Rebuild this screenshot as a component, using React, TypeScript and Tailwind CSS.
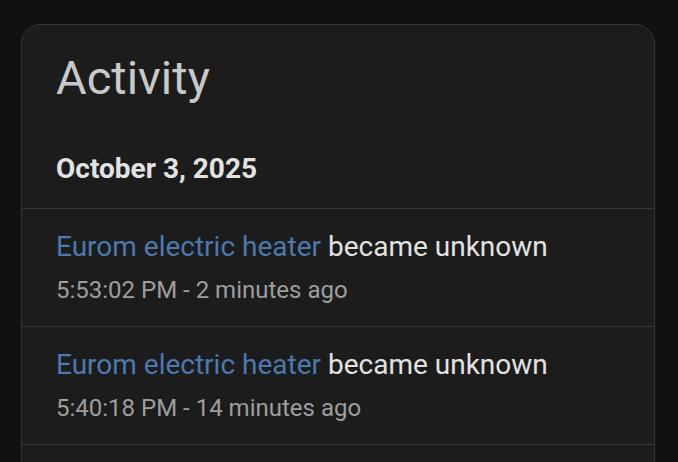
const entries = [
  { time: '5:53:02 PM', ago: '2 minutes ago' },
  { time: '5:40:18 PM', ago: '14 minutes ago' },
];

export default function App() {
  return (
    <div
      className="min-h-screen bg-[#111111] pl-[21px] pr-[23px] pt-[24px]"
      style={{ fontFamily: 'Roboto, "Noto Sans", sans-serif' }}
    >
      <div className="rounded-[20px] border border-[#353535] bg-[#1c1c1c] overflow-hidden">
        {/* Header */}
        <div className="px-[34px] pt-[29px]">
          <h1 className="text-[47px] leading-[48px] font-normal text-[#c9c9c9]">Activity</h1>
          <div className="mt-[53px] pb-[25px] text-[28px] leading-[28px] font-bold text-[#e2e2e2]">
            October 3, 2025
          </div>
        </div>

        {/* Entries */}
        {entries.map((e, i) => (
          <div key={i} className="border-t border-[#353535] px-[34px] py-6">
            <div className="text-[28px] leading-[28px] whitespace-nowrap">
              <span className="text-[#4c79ad]">Eurom electric heater</span>{' '}
              <span className="text-[#e2e2e2]">became unknown</span>
            </div>
            <div className="mt-[17px] text-[24px] leading-[24px] text-[#9e9e9e] whitespace-nowrap">
              {e.time} - {e.ago}
            </div>
          </div>
        ))}
        {/* next entry starts below the fold */}
        <div className="border-t border-[#353535] h-[40px]" />
      </div>
    </div>
  );
}
